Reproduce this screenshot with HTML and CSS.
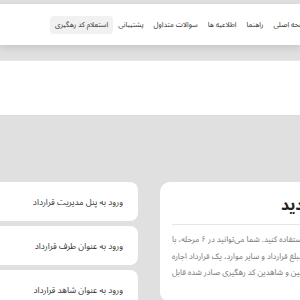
FILE: index.html
```html
<!DOCTYPE html>
<html lang="fa">
<head>
<meta charset="utf-8">
<title>سامانه قرارداد</title>
<link rel="stylesheet" href="styles.css">
</head>
<body>
<header class="header">
  <nav class="nav">
    <a class="nav-item" href="#">صفحه اصلی</a>
    <a class="nav-item" href="#">راهنما</a>
    <a class="nav-item" href="#">اطلاعیه ها</a>
    <a class="nav-item" href="#">سوالات متداول</a>
    <a class="nav-item" href="#">پشتیبانی</a>
    <a class="nav-item nav-button" href="#">استعلام کد رهگیری</a>
  </nav>
</header>

<section class="hero"></section>

<main class="content">
  <div class="info-card">
    <h2 class="info-title">ثبت قرارداد جدید</h2>
    <p class="info-text">از این سامانه استفاده کنید. شما می‌توانید در ۶ مرحله، با<br>وارد کردن مبلغ قرارداد و سایر موارد، یک قرارداد اجاره<br>ثبت کرده و برای طرفین و شاهدین کد رهگیری صادر شده قابل</p>
  </div>
  <div class="links">
    <a class="link-card" href="#">ورود به پنل مدیریت قرارداد</a>
    <a class="link-card" href="#">ورود به عنوان طرف قرارداد</a>
    <a class="link-card" href="#">ورود به عنوان شاهد قرارداد</a>
  </div>
</main>
</body>
</html>
```

FILE: styles.css
```css
html, body {
    margin: 0;
    padding: 0;
}
body {
    background: #e0e0e0;
    font-family: "Noto Sans Arabic", "DejaVu Sans", sans-serif;
    overflow: hidden;
    color: #333;
}
a {
    text-decoration: none;
    color: #333;
}

.header {
    margin-top: 4px;
    height: 41px;
    background: #fff;
    box-shadow: 0 3px 8px rgba(0, 0, 0, 0.12);
}
.nav {
    direction: rtl;
    display: flex;
    align-items: center;
    justify-content: flex-end;
    width: 360px;
    height: 100%;
    padding-left: 50px;
    box-sizing: border-box;
}
.nav-item {
    font-size: 7.2px;
    line-height: 10px;
    padding: 4px 5px;
    white-space: nowrap;
}
.nav-button {
    padding: 4px 5px;
    background: #f1f1f1;
    border-radius: 4px;
}

.hero {
    margin-top: 15px;
    height: 54px;
    background: #fff;
    border-top: 1px solid #e8e8e8;
    border-bottom: 1px solid #dadada;
}

.content {
    direction: rtl;
    display: flex;
    align-items: flex-start;
    gap: 22px;
    width: 428px;
    margin-left: -20px;
    padding-top: 66px;
}
.info-card {
    width: 248px;
    flex: none;
    background: #fff;
    border-radius: 10px;
    padding: 12px 12px 20px;
    box-sizing: border-box;
}
.info-title {
    font-size: 15.5px;
    line-height: 22px;
    margin: 0 0 7px;
    padding-bottom: 8px;
    border-bottom: 1px solid #e6e6e6;
    color: #222;
}
.info-text {
    margin: 0;
    font-size: 8px;
    line-height: 16.5px;
    color: #777;
    white-space: nowrap;
    text-align: left;
}

.links {
    flex: 1;
    display: flex;
    flex-direction: column;
    gap: 5px;
}
.link-card {
    flex: none;
    display: flex;
    align-items: center;
    height: 39px;
    padding-right: 15px;
    background: #fff;
    border-radius: 8px;
    font-size: 8.5px;
}
```
